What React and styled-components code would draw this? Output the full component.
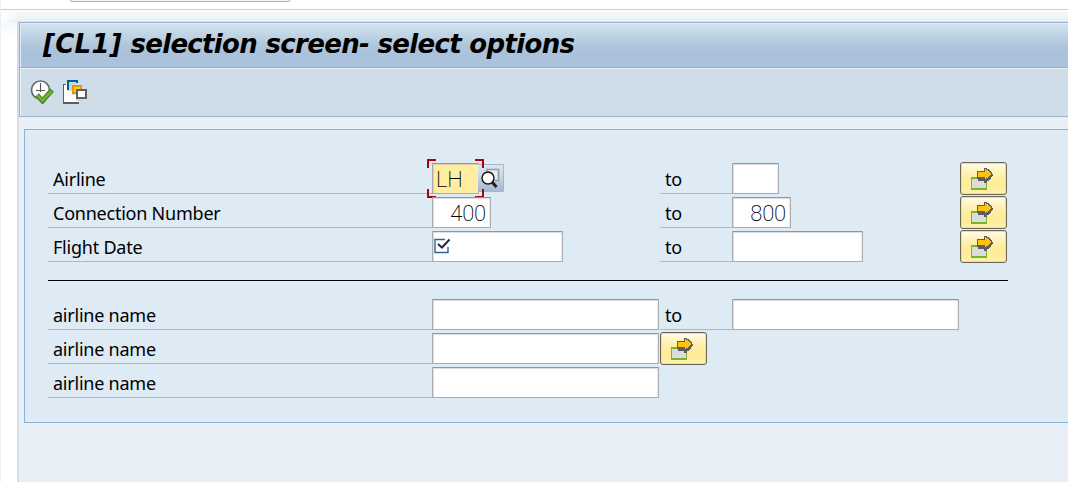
import React from 'react';
import styled, { createGlobalStyle } from 'styled-components';

const GlobalStyle = createGlobalStyle`
  * { box-sizing: border-box; }
  body { margin: 0; background: #fff; overflow: hidden; font-family: "Noto Sans", sans-serif; color: #000; }
`;

const Screen = styled.div`
  width: 1068px;
  height: 482px;
  overflow: hidden;
  display: flex;
  flex-direction: column;
  border-left: 1px solid #f0f0f1;
`;

const CommandBar = styled.div`
  height: 10px;
  flex: none;
  border-bottom: 1px solid #c9cdd4;
  margin-left: -1px;
  padding-left: 70px;
`;

const CommandField = styled.div`
  width: 220px;
  height: 2px;
  background: #f4f5f6;
  border: 1px solid #a9acb1;
  border-top: 0;
  border-radius: 0 0 2px 2px;
`;

const Shade = styled.div`
  height: 10px;
  flex: none;
  margin-top: 2px;
  background: linear-gradient(90deg, #fff, rgba(255, 255, 255, 0) 18px), linear-gradient(#f6f8fb, #eaf0f8 88%, #d3dae6);
`;

const Body = styled.div`
  flex: 1;
  display: flex;
`;

const Gutter = styled.div`
  width: 18px;
  flex: none;
  background: linear-gradient(#f3f6fb, #fff 14px);
  border-right: 2px solid #d5dae7;
`;

const Window = styled.main`
  flex: 1;
  min-width: 0;
  background: #e8eff7;
`;

const TitleBar = styled.header`
  height: 46px;
  display: flex;
  align-items: center;
  padding: 0 0 3px 23px;
  border: 1px solid #9aafca;
  border-right: 0;
  background: linear-gradient(#d3e2ee, #c8dce9 15%, #afc5da 52%, #abc2dc 70%, #abc2dc);
  box-shadow: inset 1px 1px 0 #e2ecf5;
`;

const Title = styled.h1`
  margin: 0;
  font: italic bold 26px/40px "DejaVu Sans", sans-serif;
  letter-spacing: -0.67px;
  white-space: nowrap;
`;

const SystemId = styled.span`
  letter-spacing: 0.3px;
`;

const Toolbar = styled.div`
  height: 49px;
  display: flex;
  gap: 9px;
  padding: 12px 0 0 10px;
  background: #cfdde8;
  border-left: 1px solid #a3b5cb;
  border-bottom: 1px solid #a3b5cb;
  box-shadow: inset 1px 1px 0 #e9f1f7;
`;

const Panel = styled.section`
  margin: 12px 0 0 5px;
  height: 294px;
  padding: 33px 0 0 23px;
  background: #deeaf4;
  border: 1px solid #8db2d3;
  border-right: 0;
`;

const Group = styled.div`
  display: flex;
  flex-direction: column;
  gap: 3px;
`;

const Row = styled.div`
  display: grid;
  grid-template-columns: 384px 228px 72px 228px 47px;
  height: 31px;
`;

const Label = styled.label`
  padding-left: 5px;
  border-bottom: 1px solid #b3b8be;
  font-size: 18px;
  line-height: 33px;
  height: 31px;
  letter-spacing: -0.23px;
  white-space: nowrap;
`;

const Cell = styled.div`
  display: flex;
  position: relative;
`;

const Field = styled.div`
  width: ${(p) => p.$width}px;
  height: 31px;
  padding: 0 4px 0 3px;
  display: flex;
  justify-content: ${(p) => (p.$right ? 'flex-end' : 'flex-start')};
  border: 1px solid #a9abae;
  border-top-color: #929599;
  border-radius: 1px;
  background: ${(p) => (p.$active ? '#ffee9f' : '#fff')};
  box-shadow: inset 1px 1px 1px ${(p) => (p.$active ? '#d8cfa0' : '#dcdde0')}, inset -1px 0 1px #ececef;
  font: 200 22px/32px Roboto, sans-serif;
  letter-spacing: -0.2px;
`;

const Divider = styled.hr`
  width: 960px;
  height: 1px;
  margin: 18px 0;
  border: 0;
  background: #000;
`;

const ArrowButton = styled.button`
  width: 47px;
  height: 33px;
  margin-top: -1px;
  padding: 5px 0 0 10px;
  display: flex;
  align-items: flex-start;
  border: 1px solid #6b6858;
  border-radius: 3px;
  background: linear-gradient(#fffdf2, #fff4c4 22%, #ffeea3 45%, #ffec98 72%, #fff1ad);
  box-shadow: inset 0 0 0 1px #f1df91, inset 1px 2px 0 #fffbe8;
`;

const SearchHelp = styled.button`
  width: 26px;
  height: 28px;
  margin: 1px 0 0 -1px;
  padding: 2px 0 0 3px;
  display: flex;
  align-items: flex-start;
  border: 1px solid #a7b7ca;
  border-left: 0;
  background: linear-gradient(#dce6f1, #cbd8e8 40%, #a5b9d4);
`;

const FocusFrame = styled.svg`
  position: absolute;
  left: -5px;
  top: -4px;
`;

const CheckMark = styled.svg`
  margin: 6px 0 0 -2px;
`;

function ExecuteIcon() {
  return (
    <svg width="24" height="24" viewBox="0 0 24 24">
      <circle cx="10.5" cy="10" r="9" fill="#fff" stroke="#666b6c" strokeWidth="1.7" />
      <path d="M10.5 3v9M6 10.5h9" stroke="#555" strokeWidth="1.1" fill="none" />
      <path d="M7 15l5.5 6 9.5-11" fill="none" stroke="#4a8a2c" strokeWidth="5" />
      <path d="M7.5 15.5l5 5 9-9.5" fill="none" stroke="#76b82a" strokeWidth="2.2" />
    </svg>
  );
}

function VariantIcon() {
  return (
    <svg width="25" height="24" viewBox="0 0 25 24" shapeRendering="crispEdges">
      <path d="M0 4h3V3h1v8h5v4h4v6h3v3H0z" fill="#fff" />
      <path d="M0 4h3v1H1v17h15v2H0z" fill="#5d5d5d" />
      <path d="M4 0h11v3h-2V2H6v8H4z" fill="#005f93" />
      <path d="M6 2h7v3H9v5H6z" fill="#c3d8e5" />
      <path d="M9 5h10v4h-2v1h-4v4H9z" fill="#f39200" />
      <path d="M11 7h6v2h-4v3h-2z" fill="#ffd21c" />
      <rect x="14" y="10" width="9" height="8" fill="#fff" stroke="#606060" strokeWidth="2" />
    </svg>
  );
}

function ArrowIcon() {
  return (
    <svg width="23" height="23" viewBox="0 0 23 23" shapeRendering="crispEdges">
      <path d="M0 9h16v13H0z" fill="#76b82a" />
      <path d="M1 11h14v9H1z" fill="#dcdcdc" />
      <path d="M13 0h3v1h2v1h1v1h1v1h1v2h1v2h-1v1h-1v2h-1v1h-1v1h-2v2h-3v-2H7v-2H6V3h7z" fill="#5d5d5d" />
      <path d="M7 4h7V1h1v1h2v1h1v1h1v1h1v2h-1v1h-1v1h-1v1h-2v1h-1v-2H7z" fill="#ffc20e" />
    </svg>
  );
}

function SearchIcon() {
  return (
    <svg width="21" height="23" viewBox="0 0 21 23">
      <path d="M6 4V2.5h11.5v11H14" fill="#e5edf5" stroke="#999da3" strokeWidth="1.7" />
      <path d="M11 15l4.5 5" stroke="#222" strokeWidth="3" />
      <circle cx="7" cy="11" r="6" fill="#fff" stroke="#111" strokeWidth="1.4" />
    </svg>
  );
}

function MultipleSelection() {
  return <ArrowButton type="button"><ArrowIcon /></ArrowButton>;
}

function RangeRow({ label, from, to }) {
  return (
    <Row>
      <Label>{label}</Label>
      <Cell>{from}</Cell>
      <Label>to</Label>
      <Cell>{to}</Cell>
      <MultipleSelection />
    </Row>
  );
}

export default function App() {
  return (
    <>
      <GlobalStyle />
      <Screen>
        <CommandBar><CommandField /></CommandBar>
        <Shade />
        <Body>
          <Gutter />
          <Window>
            <TitleBar><Title><SystemId>[CL1]</SystemId> selection screen- select options</Title></TitleBar>
            <Toolbar><ExecuteIcon /><VariantIcon /></Toolbar>
            <Panel>
              <Group>
                <RangeRow
                  label="Airline"
                  from={
                    <>
                      <Field $width={47} $active>LH</Field>
                      <SearchHelp type="button"><SearchIcon /></SearchHelp>
                      <FocusFrame width="57" height="39" viewBox="0 0 57 39">
                        <path d="M1 9V1h8M48 1h8v8M56 30v8h-8M9 38H1v-8" fill="none" stroke="#b00008" strokeWidth="2" />
                      </FocusFrame>
                    </>
                  }
                  to={<Field $width={47} />}
                />
                <RangeRow
                  label="Connection Number"
                  from={<Field $width={59} $right>400</Field>}
                  to={<Field $width={59} $right>800</Field>}
                />
                <RangeRow
                  label="Flight Date"
                  from={
                    <Field $width={131}>
                      <CheckMark width="17" height="16" viewBox="0 0 17 16">
                        <path d="M11 1.5H1v13h13V9" fill="none" stroke="#286794" strokeWidth="1.4" />
                        <path d="M4 6l4 3.5 7.5-8" fill="none" stroke="#26263a" strokeWidth="2" />
                      </CheckMark>
                    </Field>
                  }
                  to={<Field $width={131} />}
                />
              </Group>
              <Divider />
              <Group>
                <Row>
                  <Label>airline name</Label>
                  <Cell><Field $width={227} /></Cell>
                  <Label>to</Label>
                  <Cell><Field $width={227} /></Cell>
                </Row>
                <Row>
                  <Label>airline name</Label>
                  <Cell><Field $width={227} /></Cell>
                  <MultipleSelection />
                </Row>
                <Row>
                  <Label>airline name</Label>
                  <Cell><Field $width={227} /></Cell>
                </Row>
              </Group>
            </Panel>
          </Window>
        </Body>
      </Screen>
    </>
  );
}
